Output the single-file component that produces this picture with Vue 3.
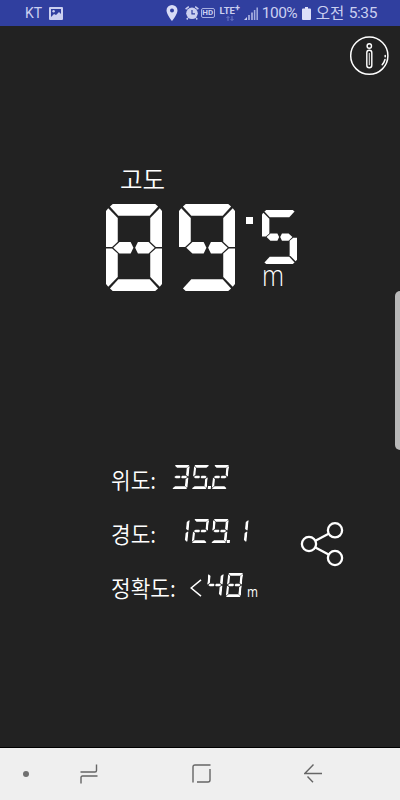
<template>
  <div class="screen">
    <header class="status">
      <span class="carrier">KT</span>
      <svg class="picture" width="14" height="13" viewBox="0 0 14 13">
        <path
          fill="#cbd0f0"
          fill-rule="evenodd"
          d="M1 0h12a1 1 0 0 1 1 1v11a1 1 0 0 1-1 1H1a1 1 0 0 1-1-1V1a1 1 0 0 1 1-1zM2 2v8l3-3 2 1 3-3 2 2V2z"
        />
        <circle cx="4.6" cy="4.2" r="1.2" fill="#cbd0f0" />
      </svg>
      <div class="status-right">
        <svg class="pin" width="12" height="16" viewBox="0 0 12 16">
          <path
            fill="#d8dcf6"
            fill-rule="evenodd"
            d="M6 0a5.5 5.5 0 0 1 5.5 5.5C11.5 9.5 6 16 6 16S.5 9.5.5 5.5A5.5 5.5 0 0 1 6 0zM6 3.5a2 2 0 1 0 0 4 2 2 0 0 0 0-4z"
          />
        </svg>
        <svg class="alarm" width="14" height="14" viewBox="0 0 14 14">
          <circle cx="7" cy="7.3" r="5.8" fill="#cbd0f0" />
          <path d="M.6 3.2 3.8.6M10.2.6l3.2 2.6M2.8 12l-1 1.5M11.2 12l1 1.5" stroke="#cbd0f0" stroke-width="1.5" />
          <path d="M7 4v3.8h3" fill="none" stroke="#303f9f" stroke-width="1.2" />
        </svg>
        <span class="hd">HD</span>
        <span class="lte">
          <span class="lte-name">LTE<sup>+</sup></span>
          <svg width="8" height="5" viewBox="0 0 8 5">
            <path d="M2 5V.5M.5 2 2 .5 3.5 2M6 0v4.5M4.5 3 6 4.5 7.5 3" fill="none" stroke="#7480c8" stroke-width=".9" />
          </svg>
        </span>
        <svg class="signal" width="14" height="13" viewBox="0 0 14 13">
          <path d="M0 13l3-3v3z" fill="#cbd0f0" />
          <path d="M5 13V8M8 13V5.5" stroke="#b9c0ea" stroke-width="1.5" />
          <path d="M10.6 13V3M13.2 13V.5" stroke="#a4ade0" stroke-width="1.5" />
        </svg>
        <span class="percent">100%</span>
        <svg class="battery" width="9" height="13" viewBox="0 0 9 13">
          <path d="M3 0h3v1.5h2a1 1 0 0 1 1 1V12a1 1 0 0 1-1 1H1a1 1 0 0 1-1-1V2.5a1 1 0 0 1 1-1h2z" fill="#dde0f8" />
        </svg>
        <span class="ampm">오전</span>
        <span class="clock">5:35</span>
      </div>
    </header>

    <main>
      <svg class="info" width="40" height="40" viewBox="0 0 40 40">
        <g fill="none" stroke="#fff">
          <circle cx="20.3" cy="19.7" r="18.6" stroke-width="1.5" />
          <circle cx="20.3" cy="10" r="2.2" stroke-width="1.4" />
          <rect x="17.8" y="14.2" width="5" height="17.5" rx="2.5" stroke-width="1.4" />
          <path d="M20.3 17v12" stroke-width=".9" />
          <path d="M36 23.5q-.8 3-2.800 5.200M36.200 19.500v1.200" stroke-width="1.5" stroke-linecap="round" />
        </g>
      </svg>

      <section class="altitude">
        <h1>고도</h1>
        <div class="altitude-value">
          <span v-for="(d, i) in altitude.whole" :key="i" class="digit large">
            <i v-for="s in segments[d]" :key="s" :class="['seg', s]"></i>
          </span>
          <i class="point"></i>
          <div class="fraction">
            <span class="digit large small">
              <i v-for="s in segments[altitude.fraction]" :key="s" :class="['seg', s]"></i>
            </span>
            <span class="unit">m</span>
          </div>
        </div>
      </section>

      <div class="details">
        <div class="rows">
          <div v-for="row in rows" :key="row.name" :class="['row', row.name]">
            <span class="label"><span>{{ row.label }}</span></span>
            <svg v-if="row.less" class="less" width="12" height="18" viewBox="0 0 12 18">
              <path d="M11 .8 1.2 9 11 17.2" fill="none" stroke="#fff" stroke-width="1.5" />
            </svg>
            <div class="reading">
              <template v-for="(c, i) in row.value" :key="i">
                <i v-if="c === '.'" class="dot"></i>
                <span v-else class="digit thin">
                  <i v-for="s in segments[c]" :key="s" :class="['seg', s]"></i>
                </span>
              </template>
            </div>
            <span v-if="row.unit" class="row-unit">{{ row.unit }}</span>
          </div>
        </div>
        <svg class="share" width="44" height="46" viewBox="0 0 44 46">
          <g fill="none" stroke="#fff" stroke-width="2.3">
            <circle cx="9" cy="23" r="7.1" />
            <circle cx="35" cy="9.3" r="7.1" />
            <circle cx="35" cy="37" r="7.1" />
            <path d="M15.4 19.7 28.6 12.8M15.4 26.4 28.6 33.6" />
          </g>
        </svg>
      </div>
      <div class="edge-handle"></div>
    </main>

    <nav>
      <span class="nav-dot"></span>
      <svg class="recents" width="18" height="20" viewBox="0 0 18 20">
        <path d="M.5 8H15q1.5 0 1.5-1.5V.5M17.5 12H2.5Q1 12 1 13.5v6" fill="none" stroke="#666" stroke-width="1.4" />
      </svg>
      <svg class="home" width="19" height="19" viewBox="0 0 19 19">
        <path d="M1 18.5V3q0-2 2-2h15.5M18 5v11q0 2-2 2H5" fill="none" stroke="#666" stroke-width="1.4" />
      </svg>
      <svg class="back" width="19" height="19" viewBox="0 0 19 19">
        <path d="M9.5.5.8 9.5H18M3.5 12.5l5.5 5.8" fill="none" stroke="#666" stroke-width="1.4" />
      </svg>
    </nav>
  </div>
</template>

<script setup>
import { ref } from "vue";

// Lit segments per character, the middle bar is split in two (g and h)
const segments = {
  1: ["b", "c"],
  2: ["a", "b", "g", "h", "e", "d"],
  3: ["a", "b", "g", "h", "c", "d"],
  4: ["f", "g", "h", "b", "c"],
  5: ["a", "f", "g", "h", "c", "d"],
  8: ["a", "b", "c", "d", "e", "f", "g", "h"],
  9: ["a", "b", "c", "d", "f", "g", "h"],
};

const altitude = ref({ whole: "89", fraction: "5" });
const rows = ref([
  { name: "latitude", label: "위도:", value: "35.2" },
  { name: "longitude", label: "경도:", value: "129.1" },
  { name: "accuracy", label: "정확도:", value: "48", less: true, unit: "m" },
]);
</script>

<style>
body {
  margin: 0;
  background: #222;
}
</style>

<style scoped>
.screen {
  display: flex;
  flex-direction: column;
  width: 400px;
  height: 800px;
  overflow: hidden;
  background: #222;
  color: #fff;
  font-family: Roboto, "Noto Sans CJK KR", sans-serif;
}

svg {
  display: block;
  flex: none;
}

.status {
  display: flex;
  align-items: center;
  box-sizing: border-box;
  height: 26px;
  padding: 0 23px 0 25px;
  background: #303f9f;
  color: #cbd0f0;
  font-size: 15px;
  line-height: 26px;
  white-space: nowrap;
}

.carrier {
  width: 24px;
  font-size: 14px;
}

.status-right {
  display: flex;
  align-items: center;
  margin-left: 103px;
}

.alarm {
  margin-left: 7px;
}

.hd {
  box-sizing: border-box;
  width: 14px;
  height: 10px;
  margin-left: 2px;
  border: 1px solid #a9b1e2;
  border-radius: 2px;
  font-size: 8px;
  font-weight: 700;
  line-height: 8.5px;
  text-align: center;
}

.lte {
  display: flex;
  flex-direction: column;
  align-items: center;
  width: 22px;
  margin-left: 4px;
}

.lte-name {
  height: 10px;
  font-size: 9.5px;
  font-weight: 700;
  line-height: 10px;
}

.lte sup {
  font-size: 9px;
  line-height: 0;
  vertical-align: 3px;
}

.signal {
  margin-left: 3px;
}

.percent,
.ampm,
.clock {
  padding-top: 1px;
  font-size: 15.5px;
  line-height: 25px;
}

.percent {
  width: 38px;
  margin-left: 4px;
  letter-spacing: -0.5px;
}

.battery {
  margin-left: 2px;
}

.ampm {
  width: 30px;
  margin-left: 5px;
  padding-top: 2px;
}

.clock {
  margin-left: 3px;
  letter-spacing: -0.4px;
}

main {
  position: relative;
  box-sizing: border-box;
  height: 722px;
  border-bottom: 1px solid #000;
}

.info {
  margin: 10px 0 0 349px;
}

.altitude {
  padding: 87px 0 0 106px;
}

h1 {
  height: 41px;
  margin: 0 0 0 14px;
  font-size: 24.5px;
  font-weight: 350;
  line-height: 36px;
}

.altitude-value {
  display: flex;
  align-items: flex-start;
}

.digit {
  display: grid;
  flex: none;
}

.seg {
  grid-area: 1 / 1;
  background: #fff;
}

.large {
  width: 56px;
  height: 87px;
  margin-right: 17px;
}

.large .a {
  clip-path: polygon(12% 0, 88% 0, 93% 3%, 78% 13.5%, 22% 13.5%, 7% 3%);
}

.large .d {
  clip-path: polygon(12% 100%, 88% 100%, 93% 97%, 78% 86.5%, 22% 86.5%, 7% 97%);
}

.large .f {
  clip-path: polygon(0 8%, 4% 5%, 21% 16%, 21% 43.5%, 11% 49.3%, 0 49.3%);
}

.large .e {
  clip-path: polygon(0 92%, 4% 95%, 21% 84%, 21% 57%, 11% 51.2%, 0 51.2%);
}

.large .b {
  clip-path: polygon(100% 8%, 96% 5%, 79% 16%, 79% 43.5%, 89% 49.3%, 100% 49.3%);
}

.large .c {
  clip-path: polygon(100% 92%, 96% 95%, 79% 84%, 79% 57%, 89% 51.2%, 100% 51.2%);
}

.large .g {
  clip-path: polygon(13% 50.2%, 24% 43.7%, 44% 43.7%, 49% 50.2%, 44% 57%, 24% 57%);
}

.large .h {
  clip-path: polygon(52% 50.2%, 57% 43.7%, 76% 43.7%, 87% 50.2%, 76% 57%, 57% 57%);
}

.point {
  width: 7px;
  height: 7px;
  margin: 13px 9px 0 -6px;
  background: #fff;
}

.fraction {
  padding-top: 6px;
}

.small {
  width: 35px;
  height: 54px;
  margin: 0;
}

.unit {
  display: block;
  font-family: "Open Sans", sans-serif;
  font-size: 29px;
  font-weight: 300;
  line-height: 22px;
  transform: scaleX(0.86);
  transform-origin: left;
}

.details {
  display: flex;
  padding: 159px 0 0 111px;
}

.rows {
  display: flex;
  flex-direction: column;
  width: 189px;
}

.row {
  display: flex;
  align-items: center;
  height: 54px;
}

.label {
  width: 60px;
  padding-top: 3px;
  font-family: "Noto Sans CJK KR", sans-serif;
  font-size: 23px;
  font-weight: 350;
  line-height: 48px;
  white-space: nowrap;
}

.label span {
  display: inline-block;
  transform: scaleX(0.93);
  transform-origin: left;
}

.accuracy .label {
  width: 79px;
}

.less {
  margin: 5px 3px 0 0;
}

.reading {
  display: flex;
  transform: skewX(-6deg);
}

.thin {
  width: 15.5px;
  height: 24px;
  margin: 0 2px;
}

.thin .a {
  clip-path: polygon(9% 0, 93% 0, 98% 3%, 83% 11%, 20% 11%, 5% 3%);
}

.thin .d {
  clip-path: polygon(9% 100%, 93% 100%, 98% 97%, 83% 89%, 20% 89%, 5% 97%);
}

.thin .f {
  clip-path: polygon(0 7%, 3% 5%, 17% 13%, 17% 42%, 3% 48%, 0 46%);
}

.thin .e {
  clip-path: polygon(0 93%, 3% 95%, 17% 87%, 17% 58%, 3% 52%, 0 54%);
}

.thin .b {
  clip-path: polygon(100% 7%, 97% 5%, 83% 13%, 83% 42%, 97% 48%, 100% 46%);
}

.thin .c {
  clip-path: polygon(100% 93%, 97% 95%, 83% 87%, 83% 58%, 97% 52%, 100% 54%);
}

.thin .g {
  clip-path: polygon(8% 50%, 19% 44.5%, 43% 44.5%, 49% 50%, 43% 55.5%, 19% 55.5%);
}

.thin .h {
  clip-path: polygon(52% 50%, 58% 44.5%, 82% 44.5%, 92% 50%, 82% 55.5%, 58% 55.5%);
}

.dot {
  align-self: flex-end;
  width: 3px;
  height: 3px;
  margin: 0 -1.25px;
  background: #fff;
}

.row-unit {
  margin: 13px 0 0 3px;
  font-family: "Open Sans", sans-serif;
  font-size: 14px;
  line-height: 14px;
  transform: scaleX(0.85);
  transform-origin: left;
}

.share {
  margin: 71px 0 0;
}

/* Samsung edge panel handle */
.edge-handle {
  position: absolute;
  top: 265px;
  right: 0;
  width: 5px;
  height: 159px;
  border-radius: 5px 0 0 5px;
  background: #b9b9b9;
}

nav {
  display: flex;
  align-items: center;
  height: 52px;
  padding-left: 23px;
  background: #efefef;
}

.nav-dot {
  width: 6px;
  height: 6px;
  border-radius: 50%;
  background: #707070;
}

.recents {
  margin: -1px 0 0 51px;
}

.home {
  margin: -2px 0 0 94px;
}

.back {
  margin: -2px 0 0 93px;
}
</style>
